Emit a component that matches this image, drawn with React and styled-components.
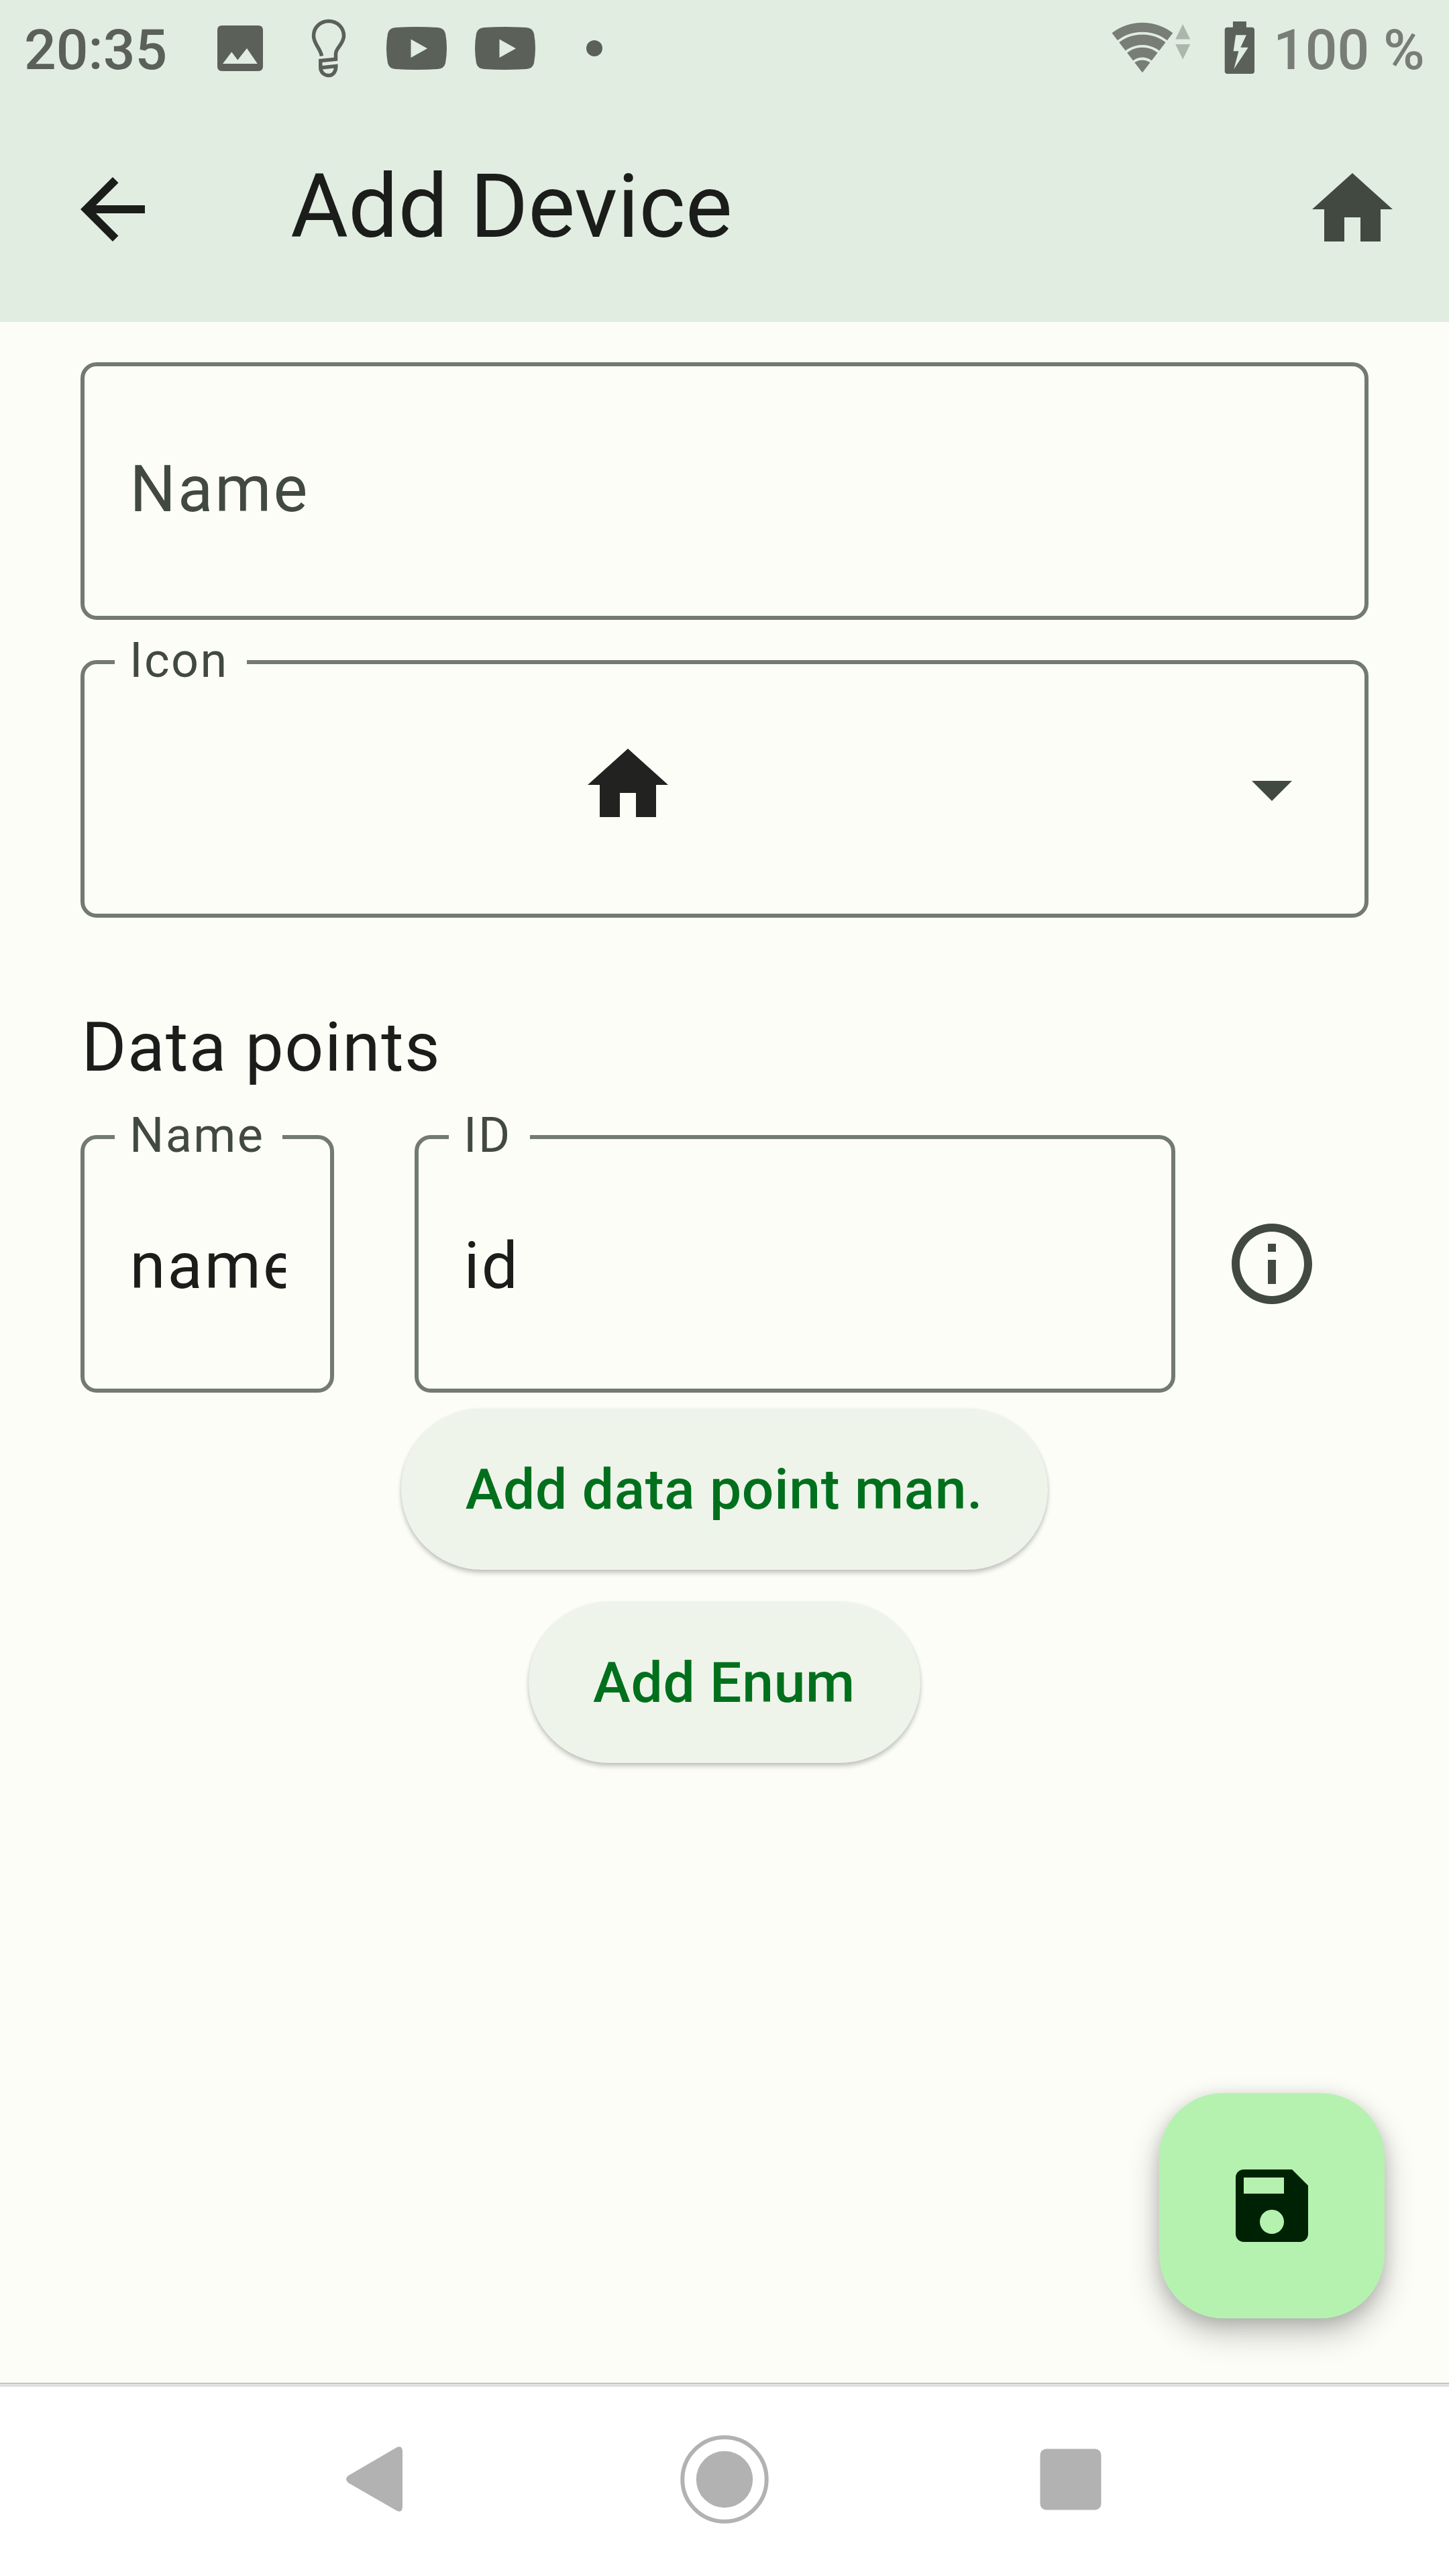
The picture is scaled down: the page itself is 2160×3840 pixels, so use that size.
import React from "react";
import styled, { createGlobalStyle } from "styled-components";

const color = {
  page: "#fcfdf7",
  header: "#e2ede1",
  text: "#1b1d1a",
  muted: "#424940",
  outline: "#727a71",
  status: "#5b6059",
  statusLight: "#787d76",
  statusFaint: "#acb7ac",
  primary: "#00701c",
  tonal: "#eff4eb",
  fab: "#b5f2b0",
  onFab: "#002204",
  nav: "#b2b2b2",
};

const GlobalStyle = createGlobalStyle`
  * { box-sizing: border-box; }
  html, body { margin: 0; padding: 0; }
  body {
    background: ${color.page};
    font-family: Roboto, "Liberation Sans", sans-serif;
    color: ${color.text};
  }
  button { font: inherit; border: 0; padding: 0; background: none; color: inherit; }
`;

const Screen = styled.div`
  width: 2160px;
  height: 3840px;
  display: flex;
  flex-direction: column;
  background: ${color.page};
  overflow: hidden;
`;

const Header = styled.header`
  height: 480px;
  background: ${color.header};
`;

const StatusBar = styled.div`
  height: 144px;
  display: flex;
  justify-content: space-between;
  padding: 0 36px;
`;

const StatusGroup = styled.div`
  display: flex;
  align-items: flex-start;
  gap: ${(p) => p.$gap}px;
`;

const StatusText = styled.span`
  width: ${(p) => p.$width}px;
  padding-top: 25px;
  font-size: 84px;
  line-height: 100px;
  font-weight: 500;
  color: ${(p) => (p.$light ? color.statusLight : color.status)};
  white-space: pre;
`;

const StatusGlyph = styled.svg`
  display: block;
  height: 144px;
  flex: none;
`;

const AppBar = styled.div`
  height: 336px;
  display: flex;
  align-items: center;
  padding: 0 72px 0 96px;
`;

const IconButton = styled.button`
  width: ${(p) => p.$size || 144}px;
  height: ${(p) => p.$size || 144}px;
  display: flex;
  align-items: center;
  justify-content: center;
  flex: none;
`;

const Glyph = styled.svg`
  width: 144px;
  height: 144px;
  display: block;
  flex: none;
  fill: ${(p) => p.$fill};
`;

const Title = styled.h1`
  flex: 1;
  margin: 0;
  padding: 0 0 8px 193px;
  font-size: 132px;
  line-height: 168px;
  font-weight: 400;
`;

const Form = styled.main`
  flex: 1;
  display: flex;
  flex-direction: column;
  padding: 60px 120px 0;
`;

const Field = styled.div`
  position: relative;
  min-width: 0;
  height: 384px;
  margin-bottom: ${(p) => p.$after || 0}px;
  padding: 0 66px;
  border: 6px solid ${color.outline};
  border-radius: 24px;
  display: flex;
  align-items: center;
`;

const FieldLabel = styled.span`
  position: absolute;
  left: 45px;
  top: -48px;
  padding: 0 27px 0 22px;
  background: ${color.page};
  color: ${color.muted};
  font-size: 72px;
  line-height: 86px;
  letter-spacing: 2.4px;
`;

const FieldText = styled.span`
  flex: 1;
  min-width: 0;
  overflow: hidden;
  white-space: nowrap;
  font-size: 96px;
  line-height: 144px;
  letter-spacing: 3px;
  padding-left: 1.5px;
  padding-top: ${(p) => (p.$placeholder ? 0 : 6)}px;
  margin-top: ${(p) => (p.$placeholder ? -6 : 0)}px;
  color: ${(p) => (p.$placeholder ? color.muted : color.text)};
`;

const SelectValue = styled.div`
  flex: 1;
  display: flex;
  justify-content: center;
  padding: 0 144px 12px 0;
`;

const SectionTitle = styled.h2`
  margin: 0;
  height: 324px;
  padding: 133px 0 0 1.5px;
  font-size: 102px;
  line-height: 120px;
  font-weight: 400;
  letter-spacing: 1.5px;
`;

const DataRow = styled.div`
  display: grid;
  grid-template-columns: minmax(0, 1fr) minmax(0, 3fr);
  column-gap: 120px;
  flex: 1;
`;

const DataLine = styled.div`
  display: flex;
  align-items: center;
`;

const Actions = styled.div`
  display: flex;
  flex-direction: column;
  align-items: center;
  gap: 48px;
  padding-top: 24px;
`;

const TonalButton = styled.button`
  height: 240px;
  padding: 2px 97px 0 96px;
  border-radius: 120px;
  background: ${color.tonal};
  color: ${color.primary};
  font-size: 84px;
  line-height: 120px;
  font-weight: 500;
  letter-spacing: 0.7px;
  box-shadow: 0 5px 7px rgba(0, 0, 0, 0.2), 0 1px 5px rgba(0, 0, 0, 0.08);
`;

const FabRow = styled.div`
  display: flex;
  justify-content: flex-end;
  margin: auto -24px 96px 0;
`;

const Fab = styled.button`
  width: 336px;
  height: 336px;
  border-radius: 96px;
  display: flex;
  align-items: center;
  justify-content: center;
  background: ${color.fab};
  box-shadow: 0 22px 48px rgba(0, 0, 0, 0.24), 0 6px 24px rgba(0, 0, 0, 0.14);
`;

const NavBar = styled.nav`
  height: 288px;
  flex: none;
  display: flex;
  justify-content: center;
  padding-top: 6px;
  background: #fff;
  box-shadow: inset 0 1px 0 #a8a8a8, inset 0 6px 0 #e0e0e0;
`;

const NavSlot = styled.div`
  width: 516px;
  display: flex;
  justify-content: center;
`;

const NavGlyph = styled.svg`
  width: 144px;
  height: 282px;
  display: block;
  fill: ${color.nav};
`;

const HomeIcon = ({ fill }) => (
  <Glyph viewBox="0 0 24 24" $fill={fill}>
    <path d="M10 20v-6h4v6h5v-8h3L12 3 2 12h3v8z" />
  </Glyph>
);

const VideoBadge = ({ x }) => (
  <g transform={`translate(${x} 0)`}>
    <path
      fill={color.status}
      d="M14 41Q45 39.200 76 41Q86 41.500 88 50Q92 72 88 94Q86 102.500 76 103Q45 104.800 14 103Q4 102.500 2 94Q-2 72 2 50Q4 41.500 14 41z"
    />
    <path fill={color.header} d="M36.500 58.500v27.500l24.500-13.750z" />
  </g>
);

const Notifications = () => (
  <StatusGlyph width="610" viewBox="300 0 610 144">
    <path
      fill={color.status}
      fillRule="evenodd"
      d="M331 38h54q7 0 7 7v54q0 7-7 7h-54q-7 0-7-7v-54q0-7 7-7zM332 95h51.800l-15.800-23-13.700 17.500-9-12z"
    />
    <path
      fill="none"
      stroke={color.status}
      strokeWidth="5.500"
      d="M479.500 83.500C478 73 467.500 65 467.500 53.500C467.500 41 477.500 31.500 490 31.500S512.500 41 512.500 53.500C512.500 65 500.500 72 500.500 80V88.300L477.800 90.500V100.500C477.800 107.500 483 112.500 490 112.500S500.800 106 500.800 98.500L478 101"
    />
    <VideoBadge x={576} />
    <VideoBadge x={708} />
    <circle cx="886" cy="72" r="12" fill={color.status} />
  </StatusGlyph>
);

const WifiAndBattery = () => (
  <StatusGlyph width="230" viewBox="1650 0 230 144">
    <path fill={color.statusLight} d="M1702.900 108.300L1657.500 49.300A74.500 74.500 0 0 1 1748.300 49.300z" />
    <g fill="none" stroke={color.header} strokeWidth="3.800">
      <path d="M1660 68.300A58.500 58.500 0 0 1 1745.800 68.300" />
      <path d="M1670 86.700A39.300 39.300 0 0 1 1735.800 86.700" />
      <path d="M1684 99.600A20.800 20.800 0 0 1 1721.800 99.600" />
    </g>
    <path fill={color.statusFaint} d="M1763.200 36l11 22.500h-22zM1752.200 66h22l-11 22.500z" />
    <path
      fill={color.status}
      fillRule="evenodd"
      d="M1837.900 32h20v8.700h8.100q4 0 4 4v61.300q0 4-4 4h-36.300q-4 0-4-4v-61.300q0-4 4-4h8.200zM1842.100 52.300l-3.500 24h7.800l-7.100 26.700 21.400-32.300h-11.400l8.600-18.400z"
    />
  </StatusGlyph>
);

export default function App() {
  return (
    <Screen>
      <GlobalStyle />
      <Header>
        <StatusBar>
          <StatusGroup $gap={52}>
            <StatusText $width={212}>20:35</StatusText>
            <Notifications />
          </StatusGroup>
          <StatusGroup $gap={18}>
            <WifiAndBattery />
            <StatusText $width={226} $light>
              100 %
            </StatusText>
          </StatusGroup>
        </StatusBar>
        <AppBar>
          <IconButton aria-label="Back">
            <Glyph viewBox="0 0 24 24" $fill={color.text}>
              <path d="M20 11H7.830l5.590-5.590L12 4l-8 8 8 8 1.410-1.410L7.830 13H20v-2z" />
            </Glyph>
          </IconButton>
          <Title>Add Device</Title>
          <IconButton aria-label="Home">
            <HomeIcon fill={color.muted} />
          </IconButton>
        </AppBar>
      </Header>

      <Form>
        <Field $after={60}>
          <FieldText $placeholder>Name</FieldText>
        </Field>
        <Field>
          <FieldLabel>Icon</FieldLabel>
          <SelectValue>
            <HomeIcon fill="#222320" />
          </SelectValue>
          <Glyph viewBox="0 0 24 24" $fill={color.muted}>
            <path d="M7 10l5 5 5-5z" />
          </Glyph>
        </Field>

        <SectionTitle>Data points</SectionTitle>
        <DataLine>
          <DataRow>
            <Field>
              <FieldLabel>Name</FieldLabel>
              <FieldText>name</FieldText>
            </Field>
            <Field>
              <FieldLabel>ID</FieldLabel>
              <FieldText>id</FieldText>
            </Field>
          </DataRow>
          <IconButton $size={288} aria-label="Info">
            <Glyph viewBox="0 0 24 24" $fill={color.muted}>
              <path d="M11 7h2v2h-2zm0 4h2v6h-2zm1-9C6.480 2 2 6.480 2 12s4.480 10 10 10 10-4.480 10-10S17.520 2 12 2zm0 18c-4.410 0-8-3.590-8-8s3.590-8 8-8 8 3.590 8 8-3.590 8-8 8z" />
            </Glyph>
          </IconButton>
        </DataLine>

        <Actions>
          <TonalButton>Add data point man.</TonalButton>
          <TonalButton>Add Enum</TonalButton>
        </Actions>

        <FabRow>
          <Fab aria-label="Save">
            <Glyph viewBox="0 0 24 24" $fill={color.onFab}>
              <path d="M17 3H5c-1.110 0-2 .9-2 2v14c0 1.100.890 2 2 2h14c1.100 0 2-.9 2-2V7l-4-4zm-5 16c-1.660 0-3-1.340-3-3s1.340-3 3-3 3 1.340 3 3-1.340 3-3 3zm3-10H5V5h10v4z" />
            </Glyph>
          </Fab>
        </FabRow>
      </Form>

      <NavBar>
        <NavSlot>
          <NavGlyph viewBox="492 3558 144 282">
            <path d="M519 3690.500L591 3648.500Q600 3644 600 3655V3736Q600 3747 591 3742.500L519 3701Q513 3695.700 519 3690.500z" />
          </NavGlyph>
        </NavSlot>
        <NavSlot>
          <NavGlyph viewBox="1008 3558 144 282">
            <circle cx="1080" cy="3696" r="42.200" />
            <circle cx="1080" cy="3696" r="62.700" fill="none" stroke={color.nav} strokeWidth="6" />
          </NavGlyph>
        </NavSlot>
        <NavSlot>
          <NavGlyph viewBox="1524 3558 144 282">
            <rect x="1550.500" y="3650.500" width="91" height="91" rx="9" />
          </NavGlyph>
        </NavSlot>
      </NavBar>
    </Screen>
  );
}
